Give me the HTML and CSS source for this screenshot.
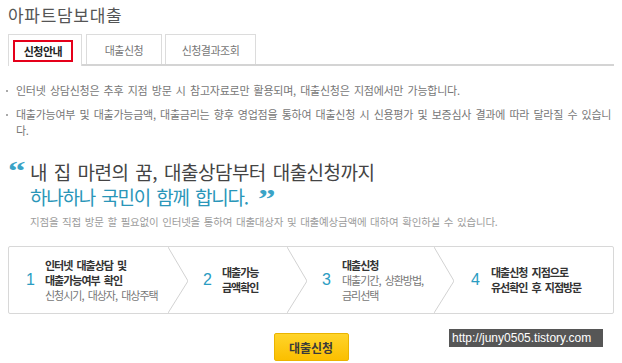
FILE: index.html
```html
<!DOCTYPE html>
<html lang="ko">
<head>
<meta charset="utf-8">
<title>아파트담보대출</title>
<link rel="stylesheet" href="styles.css">
</head>
<body>
<div class="page">
  <h1 class="title">아파트담보대출</h1>
  <div class="tabs">
    <div class="tab t1 active"><span class="mark">신청안내</span></div>
    <div class="tab t2">대출신청</div>
    <div class="tab t3">신청결과조회</div>
  </div>
  <ul class="notes">
    <li><span class="dot"></span><span class="ntext">인터넷 상담신청은 추후 지점 방문 시 참고자료로만 활용되며, 대출신청은 지점에서만 가능합니다.</span></li>
    <li><span class="dot"></span><span class="ntext">대출가능여부 및 대출가능금액, 대출금리는 향후 영업점을 통하여 대출신청 시 신용평가 및 보증심사 결과에 따라 달라질 수 있습니다.</span></li>
  </ul>
  <div class="slogan">
    <p class="s1"><span class="q open">“</span>내 집 마련의 꿈, 대출상담부터 대출신청까지</p>
    <p class="s2">하나하나 국민이 함께 합니다. <span class="q close">”</span></p>
    <p class="sub">지점을 직접 방문 할 필요없이 인터넷을 통하여 대출대상자 및 대출예상금액에 대하여 확인하실 수 있습니다.</p>
  </div>
  <div class="steps">
    <div class="step st1">
      <span class="num">1</span>
      <span class="txt"><b>인터넷 대출상담 및</b><br><b>대출가능여부 확인</b><br>신청시기, 대상자, 대상주택</span>
    </div>
    <svg class="chev" viewBox="0 0 20 66" preserveAspectRatio="none"><polyline points="0,0 20,34 0,66" fill="none" stroke="#d2d2d2" stroke-width="1"/></svg>
    <div class="step st2">
      <span class="num">2</span>
      <span class="txt"><b>대출가능</b><br><b>금액확인</b></span>
    </div>
    <svg class="chev" viewBox="0 0 20 66" preserveAspectRatio="none"><polyline points="0,0 20,34 0,66" fill="none" stroke="#d2d2d2" stroke-width="1"/></svg>
    <div class="step st3">
      <span class="num">3</span>
      <span class="txt"><b>대출신청</b><br>대출기간, 상환방법,<br>금리선택</span>
    </div>
    <svg class="chev" viewBox="0 0 20 66" preserveAspectRatio="none"><polyline points="0,0 20,34 0,66" fill="none" stroke="#d2d2d2" stroke-width="1"/></svg>
    <div class="step st4">
      <span class="num">4</span>
      <span class="txt"><b>대출신청 지점으로</b><br><b>유선확인 후 지점방문</b></span>
    </div>
  </div>
  <div class="actions"><button class="btn" type="button">대출신청</button></div>
  <div class="watermark">http://juny0505.tistory.com</div>
</div>
</body>
</html>
```
FILE: styles.css
```css
* { box-sizing: border-box; }
body {
  margin: 0;
  background: #fff;
  font-family: "Noto Sans CJK KR", "Noto Sans", sans-serif;
  color: #666;
}
.page {
  position: relative;
  width: 622px;
  height: 363px;
  padding: 5px 8px 0;
  overflow: hidden;
}
.title {
  margin: 0;
  font-size: 17px;
  line-height: 20px;
  font-weight: 400;
  letter-spacing: 0.7px;
  color: #555;
}
.tabs {
  display: flex;
  align-items: flex-start;
  gap: 4px;
  margin-top: 9px;
  height: 32px;
  border-bottom: 2px solid #d4d4d4;
}
.tab {
  height: 30px;
  border: 1px solid #dcdcdc;
  border-bottom: none;
  background: #fff;
  display: flex;
  align-items: center;
  justify-content: center;
  font-size: 11px;
  letter-spacing: -0.5px;
  color: #777;
}
.t1 { width: 74px; }
.t2 { width: 76px; }
.t3 { width: 91px; margin-left: -1px; }
.tab.active {
  height: 32px;
  justify-content: flex-start;
  padding-left: 4px;
}
.mark {
  width: 60px;
  height: 22px;
  border: 2px solid #e5001a;
  display: flex;
  align-items: center;
  justify-content: center;
  font-weight: 700;
  color: #222;
}
.notes {
  list-style: none;
  margin: 16px 0 0;
  padding: 0;
  font-size: 11px;
  line-height: 16px;
  letter-spacing: -0.25px;
  word-spacing: 1.5px;
  color: #777;
}
.notes li {
  display: flex;
  margin-bottom: 8px;
}
.notes li:last-child { margin-bottom: 0; }
.dot {
  flex: none;
  width: 2px;
  height: 2px;
  background: #aaa;
  margin: 8px 8px 0 -2px;
}
.slogan {
  margin-top: 21px;
  padding-left: 22px;
}
.s1, .s2 {
  margin: 0;
  font-size: 19px;
  line-height: 25px;
  letter-spacing: -0.5px;
  word-spacing: 2px;
  color: #444;
}
.s2 {
  color: #2a96b9;
  letter-spacing: -1.2px;
}
.q {
  display: inline-block;
  height: 25px;
  vertical-align: top;
  font-family: "Liberation Serif", serif;
  font-weight: 700;
  font-size: 28px;
  line-height: 24px;
  letter-spacing: 0;
  color: #3aa3c6;
  transform: scaleX(1.25);
  transform-origin: left center;
}
.q.open { width: 22px; margin-left: -22px; }
.q.close { line-height: 29px; margin-left: 4px; }
.sub {
  margin: 6px 0 0;
  font-size: 10.5px;
  line-height: 14px;
  letter-spacing: -0.2px;
  word-spacing: 1px;
  color: #9c9c9c;
}
.steps {
  display: flex;
  margin-top: 17px;
  height: 68px;
  border: 1px solid #d8d8d8;
  border-radius: 2px;
}
.step {
  display: flex;
  align-items: center;
  flex: none;
}
.st1 { width: 159px; padding-left: 17px; }
.st2 { width: 99px; padding-left: 15px; }
.st3 { width: 127px; padding-left: 15px; }
.st4 { flex: 1; padding-left: 17px; }
.chev {
  flex: none;
  width: 20px;
  height: 66px;
}
.num {
  flex: none;
  width: 19px;
  font-family: "Liberation Sans", sans-serif;
  font-size: 16px;
  color: #2a9cc2;
}
.st3 .num, .st4 .num { width: 20px; }
.txt {
  white-space: nowrap;
  font-size: 11px;
  line-height: 15px;
  letter-spacing: -1px;
  word-spacing: 2px;
  color: #777;
}
.txt b {
  font-weight: 700;
  color: #333;
}
.actions {
  display: flex;
  justify-content: center;
  margin-top: 19px;
}
.btn {
  width: 75px;
  height: 28px;
  border: 1px solid #eab400;
  border-radius: 2px;
  background: linear-gradient(#ffd42a, #fbbf00);
  font-family: "Noto Sans CJK KR", sans-serif;
  font-weight: 700;
  font-size: 12px;
  color: #3a3a3a;
  padding: 0;
}
.watermark {
  position: absolute;
  left: 449px;
  top: 329px;
  width: 154px;
  height: 18px;
  padding-left: 3px;
  background: #565656;
  color: #fff;
  font-family: "Liberation Sans", sans-serif;
  font-size: 12px;
  line-height: 18px;
}
```
